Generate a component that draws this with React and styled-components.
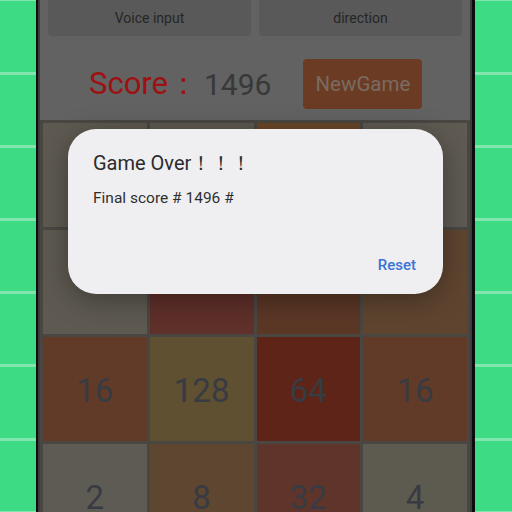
import styled, { createGlobalStyle } from "styled-components"

const GlobalStyle = createGlobalStyle`
    html, body {
        margin: 0;
        padding: 0;
        background: #3ddc84;
    }
    * { box-sizing: border-box; }
`

const Desk = styled.div`
    width: 512px;
    height: 512px;
    display: flex;
    overflow: hidden;
    font-family: Roboto, "Liberation Sans", sans-serif;
`

const Rail = styled.div`
    width: ${p => p.w + 'px'};
    flex-shrink: 0;
    background: repeating-linear-gradient(
        to bottom,
        #80e6ad 0px,
        #80e6ad 1.5px,
        #3ddc84 1.5px,
        #3ddc84 71.7px,
        #80e6ad 71.7px,
        #80e6ad 73.2px
    );
`

const Bezel = styled.div`
    width: 439px;
    flex-shrink: 0;
    border-left: 2px solid #0c0c0c;
    border-right: 3px solid #0c0c0c;
`

const Screen = styled.div`
    position: relative;
    height: 100%;
    background: #626262;
    border-left: 2px solid #3c3c3c;
    border-right: 2px solid #3c3c3c;
    display: flex;
    flex-direction: column;
    overflow: hidden;
`

const TopBar = styled.div`
    display: flex;
    flex-shrink: 0;
    gap: 8px;
    padding: 0 8px;
    margin-top: -8px;
`

const TopButton = styled.div`
    flex: 1;
    height: 44px;
    padding-top: 8px;
    border-radius: 4px;
    background: #595959;
    color: #262626;
    font-size: 14px;
    display: flex;
    align-items: center;
    justify-content: center;
`

const ScoreRow = styled.div`
    height: 84px;
    flex-shrink: 0;
    display: flex;
    align-items: center;
    padding-left: 49px;
    padding-top: 12px;
`

const ScoreLabel = styled.span`
    font-size: 31px;
    color: #9c1111;
`

const ScoreValue = styled.span`
    font-size: 30px;
    color: #383838;
    margin-left: 5px;
`

const NewGameButton = styled.div`
    margin-left: 32px;
    width: 119px;
    height: 50px;
    border-radius: 4px;
    background: #6b3c23;
    color: #7a6b61;
    font-size: 20.5px;
    display: flex;
    align-items: center;
    justify-content: center;
`

const Board = styled.div`
    display: grid;
    flex-shrink: 0;
    grid-template-columns: repeat(4, 1fr);
    grid-auto-rows: 104px;
    gap: 3px;
    padding: 3px;
    background: #4a4743;
`

const Tile = styled.div`
    background: ${p => p.bg};
    color: #383b42;
    font-size: 33px;
    display: flex;
    align-items: center;
    justify-content: center;
    padding-top: 2px;
`

const Dialog = styled.div`
    position: absolute;
    left: 28px;
    top: 129px;
    width: 375px;
    height: 165px;
    border-radius: 28px;
    background: #efeff2;
    box-shadow: 0 6px 28px rgba(0, 0, 0, 0.35);
    padding: 22px 25px 0 25px;
    display: flex;
    flex-direction: column;
`

const DialogTitle = styled.div`
    font-size: 20px;
    color: #2b2b2b;
    line-height: 24px;
`

const DialogText = styled.div`
    margin-top: 13px;
    font-size: 15.5px;
    color: #2f2f2f;
    line-height: 20px;
`

const DialogActions = styled.div`
    margin-top: auto;
    margin-bottom: 20px;
    display: flex;
    justify-content: flex-end;
    padding-right: 2px;
`

const ActionButton = styled.div`
    font-size: 15px;
    font-weight: 500;
    color: #3a72d6;
`

const tiles = [
    { v: '', bg: '#5e5a51' },
    { v: '', bg: '#5e5a51' },
    { v: '', bg: '#6b4628' },
    { v: '', bg: '#5f5b53' },
    { v: '', bg: '#5e5a51' },
    { v: '', bg: '#60302a' },
    { v: '', bg: '#5b3726' },
    { v: '', bg: '#5f4530' },
    { v: '16', bg: '#613a28' },
    { v: '128', bg: '#5e5030' },
    { v: '64', bg: '#5e2418' },
    { v: '16', bg: '#613a28' },
    { v: '2', bg: '#5e5b54' },
    { v: '8', bg: '#5f4630' },
    { v: '32', bg: '#5f342a' },
    { v: '4', bg: '#5d5a50' },
]

export default function App () {
    return (
        <>
            <GlobalStyle />
            <Desk>
                <Rail w={36} />
                <Bezel>
                    <Screen>
                        <TopBar>
                            <TopButton>Voice input</TopButton>
                            <TopButton>direction</TopButton>
                        </TopBar>
                        <ScoreRow>
                            <ScoreLabel>Score：</ScoreLabel>
                            <ScoreValue>1496</ScoreValue>
                            <NewGameButton>NewGame</NewGameButton>
                        </ScoreRow>
                        <Board>
                            {tiles.map((t, i) => (
                                <Tile key={i} bg={t.bg}>{t.v}</Tile>
                            ))}
                        </Board>
                        <Dialog>
                            <DialogTitle>Game Over！！！</DialogTitle>
                            <DialogText>Final score # 1496 #</DialogText>
                            <DialogActions>
                                <ActionButton>Reset</ActionButton>
                            </DialogActions>
                        </Dialog>
                    </Screen>
                </Bezel>
                <Rail w={37} />
            </Desk>
        </>
    )
}
